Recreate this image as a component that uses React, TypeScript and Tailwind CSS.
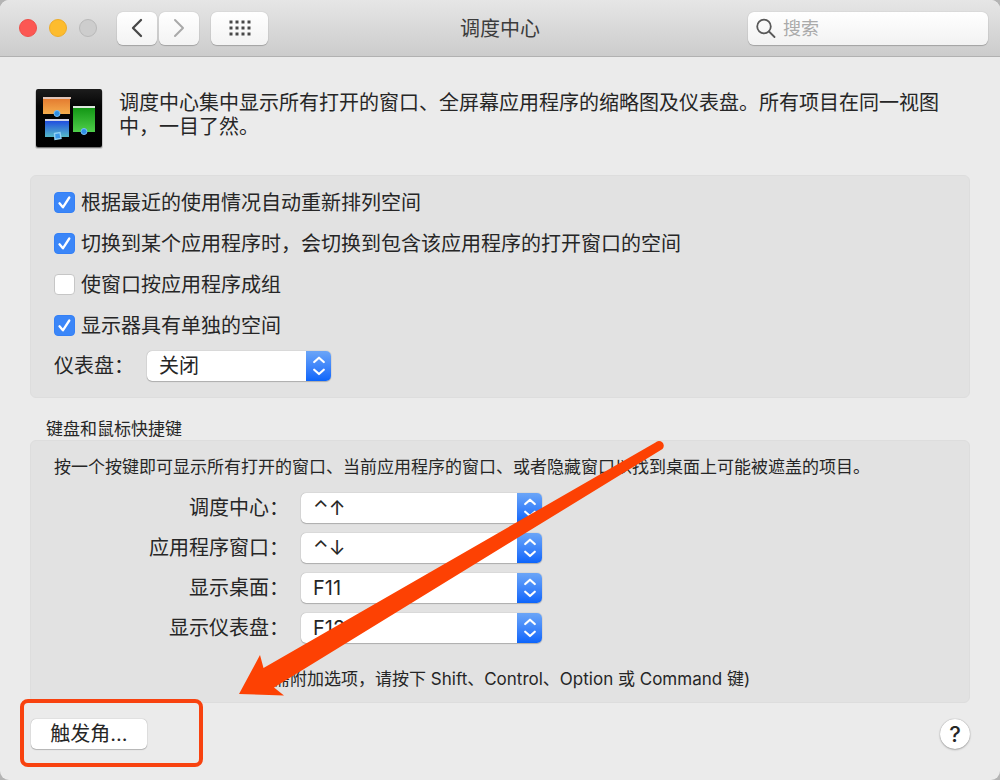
import React, { useState } from 'react';

interface Option {
  id: string;
  label: string;
  checked: boolean;
}

interface Shortcut {
  id: string;
  label: string;
  value: string;
}

const options: Option[] = [
  { id: 'rearrange', label: '根据最近的使用情况自动重新排列空间', checked: true },
  { id: 'switch', label: '切换到某个应用程序时，会切换到包含该应用程序的打开窗口的空间', checked: true },
  { id: 'group', label: '使窗口按应用程序成组', checked: false },
  { id: 'displays', label: '显示器具有单独的空间', checked: true },
];

const shortcuts: Shortcut[] = [
  { id: 'mission-control', label: '调度中心：', value: '⌃↑' },
  { id: 'app-windows', label: '应用程序窗口：', value: '⌃↓' },
  { id: 'desktop', label: '显示桌面：', value: 'F11' },
  { id: 'dashboard-key', label: '显示仪表盘：', value: 'F12' },
];

const toolbarButton =
  'flex h-[33px] items-center justify-center rounded-md bg-gradient-to-b from-white to-[#f3f3f3] shadow-[0_0_1px_rgba(0,0,0,0.3),0_1px_1px_rgba(0,0,0,0.2)]';

function MissionControlIcon() {
  return (
    <svg width="68" height="62" viewBox="0 0 68 62" className="shrink-0" aria-hidden="true">
      <defs>
        <linearGradient id="orange" x1="0" y1="0" x2="0" y2="1">
          <stop offset="0" stopColor="#e3792f" />
          <stop offset="1" stopColor="#f5ad4d" />
        </linearGradient>
        <linearGradient id="blue" x1="0" y1="0" x2="0" y2="1">
          <stop offset="0" stopColor="#1d48e0" />
          <stop offset="1" stopColor="#55b9c8" />
        </linearGradient>
        <linearGradient id="green" x1="0" y1="0" x2="0" y2="1">
          <stop offset="0" stopColor="#119413" />
          <stop offset="1" stopColor="#4fce4a" />
        </linearGradient>
        <linearGradient id="screen" x1="0" y1="0" x2="0" y2="1">
          <stop offset="0" stopColor="#1c1c1c" />
          <stop offset="0.3" stopColor="#050505" />
          <stop offset="1" stopColor="#000" />
        </linearGradient>
      </defs>
      <rect x="0" y="2" width="68" height="59" rx="3" fill="#000" opacity="0.15" />
      <rect x="1" y="2" width="66" height="58" rx="2" fill="#777" />
      <rect x="1" y="1" width="66" height="58" rx="2" fill="url(#screen)" />
      <rect x="8" y="10" width="27" height="16" fill="url(#orange)" />
      <rect x="8" y="9" width="28" height="2" fill="#e0c4b8" />
      <rect x="10" y="32" width="24" height="17" fill="url(#blue)" />
      <rect x="10" y="31" width="24" height="2" fill="#cfd3e8" />
      <rect x="38" y="19" width="22" height="25" fill="url(#green)" />
      <rect x="38" y="18" width="22" height="2" fill="#dce8dc" />
      <circle cx="22" cy="25.500" r="3" fill="#2f8fe6" stroke="#79bff5" />
      <circle cx="49" cy="43.500" r="3" fill="#2f8fe6" stroke="#79bff5" />
      <path d="M19.500 45.500l5.500-1 1 6-6 1z" fill="#3a97e8" stroke="#8fd0f5" strokeWidth="1.4" />
    </svg>
  );
}

function PopUp({ id, value, className = '' }: { id: string; value: string; className?: string }) {
  return (
    <div className={`relative h-[30px] ${className}`}>
      <select
        id={id}
        defaultValue={value}
        className="h-full w-full appearance-none rounded-[5px] bg-white pr-8 pl-3 text-xl leading-[30px] shadow-[0_0_1px_rgba(0,0,0,0.4),0_1px_1px_rgba(0,0,0,0.2)] outline-none"
      >
        <option value={value}>{value}</option>
      </select>
      <span className="pointer-events-none absolute inset-y-0 right-0 flex w-[25px] items-center justify-center rounded-r-[5px] bg-gradient-to-b from-[#6ba5f7] to-[#0a64fb]">
        <svg width="14" height="22" viewBox="0 0 14 22" fill="none" stroke="white" strokeWidth="2.2" strokeLinecap="round" strokeLinejoin="round">
          <path d="M2.200 7l4.800-4.300 4.800 4.300M2.200 14.700l4.800 4.300 4.800-4.300" />
        </svg>
      </span>
    </div>
  );
}

function OptionRow({ option }: { option: Option }) {
  const [checked, setChecked] = useState(option.checked);

  return (
    <div className="flex h-[30px] items-center">
      <span className="relative h-[21px] w-[21px] shrink-0">
        <input
          id={option.id}
          type="checkbox"
          checked={checked}
          onChange={(e) => setChecked(e.target.checked)}
          className="block h-full w-full appearance-none rounded-[4px] border border-[#c6c6c6] bg-white checked:border-[#3480f6] checked:bg-[#3b86f8]"
        />
        {checked && (
          <svg viewBox="0 0 21 21" className="pointer-events-none absolute inset-0" fill="none" stroke="white" strokeWidth="2.3" strokeLinecap="round" strokeLinejoin="round">
            <path d="M5.5 11.3l3.4 4L15.3 5.5" />
          </svg>
        )}
      </span>
      <label htmlFor={option.id} className="pt-0.5 pl-1.5">{option.label}</label>
    </div>
  );
}

function Toolbar() {
  return (
    <header className="grid h-[57px] shrink-0 grid-cols-[1fr_auto_1fr] items-center border-b border-[#b1b1b1] bg-gradient-to-b from-[#e6e6e6] to-[#cccccc] px-3">
      <div className="flex items-center pl-[7px]">
        <div className="flex gap-3">
          <button aria-label="关闭窗口" className="h-[18px] w-[18px] rounded-full border border-[#ee4f49] bg-[#fc5753]" />
          <button aria-label="最小化" className="h-[18px] w-[18px] rounded-full border border-[#eeac28] bg-[#fdbc2e]" />
          <button aria-label="缩放" disabled className="h-[18px] w-[18px] rounded-full border border-[#b9b9b9] bg-[#cdcdcd]" />
        </div>
        <div className="ml-5 flex gap-0.5">
          <button aria-label="后退" className={`${toolbarButton} w-10`}>
            <svg width="12" height="20" viewBox="0 0 12 20" fill="none" stroke="#474747" strokeWidth="2.3" strokeLinecap="round" strokeLinejoin="round">
              <path d="M10 2L2 10l8 8" />
            </svg>
          </button>
          <button aria-label="前进" className={`${toolbarButton} w-10`}>
            <svg width="12" height="20" viewBox="0 0 12 20" fill="none" stroke="#a9a9a9" strokeWidth="2" strokeLinecap="round" strokeLinejoin="round">
              <path d="M2 2l8 8-8 8" />
            </svg>
          </button>
        </div>
        <button aria-label="显示全部" className={`${toolbarButton} ml-3 w-[57px]`}>
          <svg width="22" height="16" viewBox="0 0 22 16" fill="#484848">
            {[0, 6, 12].map((y) =>
              [0, 6, 12, 18].map((x) => <rect key={`${x}-${y}`} x={x + 0.5} y={y + 0.5} width="3" height="3" />)
            )}
          </svg>
        </button>
      </div>
      <h1 className="pt-0.5 text-xl text-[#3c3c3c]">调度中心</h1>
      <div className="flex h-[33px] w-60 items-center justify-self-end rounded-md bg-gradient-to-b from-white to-[#f2f2f2] pl-2 shadow-[0_0_1px_rgba(0,0,0,0.3),0_1px_1px_rgba(0,0,0,0.2)]">
        <svg width="20" height="20" viewBox="0 0 20 20" fill="none" stroke="#5a5a5a" strokeWidth="1.8" strokeLinecap="round" className="shrink-0">
          <circle cx="8" cy="8.500" r="6.800" />
          <path d="M13 13.500l5.500 5.500" />
        </svg>
        <input type="search" aria-label="搜索" placeholder="搜索" className="w-full min-w-0 bg-transparent pt-0.5 pl-[7px] text-lg outline-none placeholder:text-[#aaa]" />
      </div>
    </header>
  );
}

export default function App() {
  return (
    <div className="min-h-screen bg-[#b4b4b4]">
      <div className="relative flex min-h-screen flex-col overflow-hidden rounded-[9px] bg-[#ebebeb] font-[Inter,'Noto_Sans_CJK_SC',sans-serif] text-xl leading-6 text-[#262626]">
        <Toolbar />

        <main lang="zh-CN" className="flex flex-col px-[30px] pt-[31px]">
          <div className="flex gap-4 pr-4 pl-[5px]">
            <MissionControlIcon />
            <p className="pt-[3px]">
              调度中心集中显示所有打开的窗口、全屏幕应用程序的缩略图及仪表盘。所有项目在同一视图中，一目了然。
            </p>
          </div>

          <section className="mt-[25px] flex flex-col gap-[11px] rounded-md border border-[#dddddd] bg-[#e2e2e2] px-[23px] pt-[11px] pb-4">
            {options.map((option) => (
              <OptionRow key={option.id} option={option} />
            ))}
            <div className="flex items-center">
              <label htmlFor="dashboard" className="w-[93px]">仪表盘：</label>
              <PopUp id="dashboard" value="关闭" className="w-[184px]" />
            </div>
          </section>

          <h2 className="mt-5 pl-4 text-[17px] leading-[22px]">键盘和鼠标快捷键</h2>
          <section className="rounded-md border border-[#dddddd] bg-[#e2e2e2] px-[23px] pt-[14px] pb-[11px]">
            <p className="text-[17px]">
              按一个按键即可显示所有打开的窗口、当前应用程序的窗口、或者隐藏窗口以找到桌面上可能被遮盖的项目。
            </p>
            <div className="mt-[14px] flex flex-col gap-2.5">
              {shortcuts.map((shortcut) => (
                <div key={shortcut.id} className="flex items-center gap-3">
                  <label htmlFor={shortcut.id} className="w-[235px] text-right">{shortcut.label}</label>
                  <PopUp id={shortcut.id} value={shortcut.value} className="w-[241px]" />
                </div>
              ))}
            </div>
            <p className="mt-6 text-center text-[17px]">
              (如需附加选项，请按下 Shift、Control、Option 或 Command 键)
            </p>
          </section>

          <footer className="flex items-center justify-between pt-4">
            <div className="relative ml-px">
              <button className="h-[30px] w-[116px] rounded-[5px] bg-white leading-[30px] shadow-[0_0_1px_rgba(0,0,0,0.4),0_1px_1px_rgba(0,0,0,0.2)]">
                触发角...
              </button>
              <span className="pointer-events-none absolute -top-5 -left-[11px] h-[68px] w-[183px] rounded-lg border-4 border-[#f8420f]" />
            </div>
            <button aria-label="帮助" className="h-[30px] w-[30px] rounded-full bg-white text-[22px] font-medium leading-[30px] shadow-[0_0_1px_rgba(0,0,0,0.4),0_1px_2px_rgba(0,0,0,0.25)]">
              ?
            </button>
          </footer>
        </main>

        {/* Arrow pointing at the hot corners button */}
        <svg width="430" height="260" viewBox="0 0 430 260" className="pointer-events-none absolute top-[440px] left-[236px]" aria-hidden="true">
          <path d="M3 254L24 215L27.500 228L419.500 2.500A4.300 4.300 0 0 1 426.500 9L38 247.500L48 255.500Z" fill="#fd4103" />
        </svg>
      </div>
    </div>
  );
}
